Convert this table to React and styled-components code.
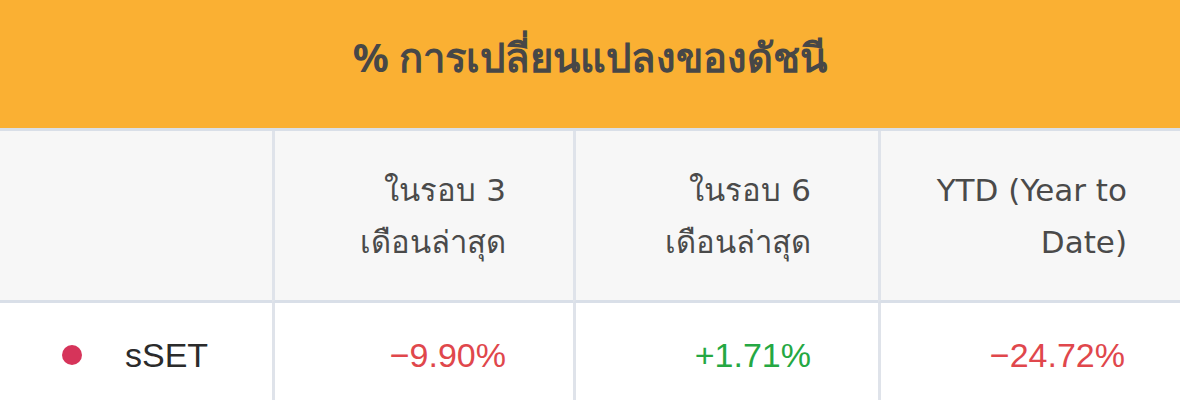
import React from 'react'
import styled, { createGlobalStyle } from 'styled-components';

const GlobalStyle = createGlobalStyle`
  body {
    margin: 0;
    background: #fff;
    font-family: "Noto Sans", "Liberation Sans", sans-serif;
  }
`

const rows = [
  { name: 'sSET', color: '#d6345a', values: ['−9.90%', '+1.71%', '−24.72%'] },
];

const heads = [
  ['ในรอบ 3', 'เดือนล่าสุด'],
  ['ในรอบ 6', 'เดือนล่าสุด'],
  ['YTD (Year to', 'Date)'],
];

function App() {
  return (
    <Wrapper>
      <GlobalStyle />
      <Title>% การเปลี่ยนแปลงของดัชนี</Title>
      <Table>
        <HeadCell />
        {heads.map((h, i) => (
          <HeadCell key={i} last={i === heads.length - 1}>
            {h[0]}<br />{h[1]}
          </HeadCell>
        ))}
        {rows.map(r => (
          <React.Fragment key={r.name}>
            <NameCell>
              <Dot color={r.color} />
              {r.name}
            </NameCell>
            {r.values.map((v, i) => (
              <ValueCell key={i} up={v.startsWith('+')} last={i === r.values.length - 1}>
                {v}
              </ValueCell>
            ))}
          </React.Fragment>
        ))}
      </Table>
    </Wrapper>
  )
}

export default App;

const Wrapper = styled.div`
  width: 1180px;
  height: 400px;
  overflow: hidden;
`

const Title = styled.div`
  height: 128px;
  background: #fab033;
  color: #474747;
  font-size: 40px;
  font-weight: 700;
  display: flex;
  align-items: center;
  justify-content: center;
  padding-bottom: 12px;
  box-sizing: border-box;
`

const Table = styled.div`
  display: grid;
  grid-template-columns: 272px 301px 305px 1fr;
  border-top: 3px solid #d9dfe8;
`

const HeadCell = styled.div`
  height: 169px;
  background: #f7f7f7;
  border-bottom: 3px solid #d9dfe8;
  border-left: 3px solid #dfe3ea;
  &:first-child { border-left: none; }
  box-sizing: content-box;
  display: flex;
  align-items: center;
  justify-content: flex-end;
  text-align: right;
  padding-right: ${p => p.last ? '53px' : '67px'};
  color: #4a4a4a;
  font-family: "DejaVu Sans", "Noto Sans", sans-serif;
  font-size: 31px;
  line-height: 52px;
`

const NameCell = styled.div`
  height: 104px;
  display: flex;
  align-items: center;
  padding-left: 62px;
  font-family: "Liberation Sans", Arial, sans-serif;
  font-size: 34px;
  color: #2b2b2b;
`

const Dot = styled.span`
  width: 20px;
  height: 20px;
  border-radius: 50%;
  background: ${p => p.color};
  margin-right: 43px;
`

const ValueCell = styled.div`
  height: 104px;
  border-left: 3px solid #dfe3ea;
  display: flex;
  align-items: center;
  justify-content: flex-end;
  padding-right: ${p => p.last ? '55px' : '67px'};
  font-family: "Liberation Sans", Arial, sans-serif;
  font-size: 34px;
  color: ${p => p.up ? '#25a843' : '#e0474c'};
`
